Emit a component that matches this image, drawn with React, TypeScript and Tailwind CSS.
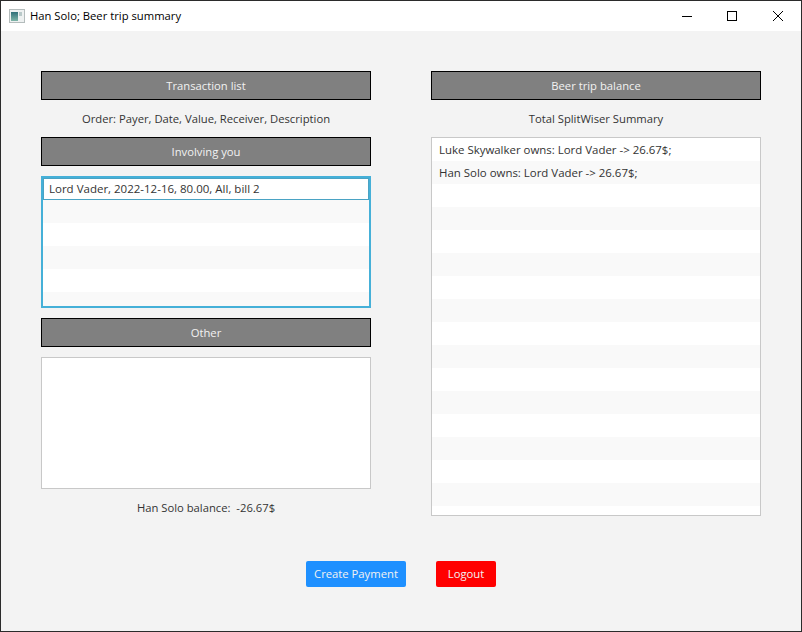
import React from 'react';

const font = "font-['Open_Sans','Noto_Sans',sans-serif]";

const SectionBar = ({ children }: { children: React.ReactNode }) => (
    <div className="h-[29px] shrink-0 flex items-center justify-center pt-px bg-[#808080] border border-black text-[11.25px] text-[#f2f2f2]">
        {children}
    </div>
);

const Caption = ({ children }: { children: React.ReactNode }) => (
    <div className="h-[37px] shrink-0 flex items-center justify-center pt-[2px] text-[11.25px] text-[#333333]">{children}</div>
);

const Row = ({ index, text }: { index: number; text?: string }) => (
    <div className={`h-[23px] shrink-0 flex items-center pl-[7px] text-[11.45px] text-[#333333] ${index % 2 === 1 ? 'bg-[#f9f9f9]' : 'bg-white'}`}>
        {text}
    </div>
);

const App: React.FC = () => {
    const summary = ['Luke Skywalker owns: Lord Vader -> 26.67$;', 'Han Solo owns: Lord Vader -> 26.67$;'];

    return (
        <div className={`${font} w-[802px] h-[632px] flex flex-col bg-[#f3f3f3] border border-[#2b2b2b] overflow-hidden`}>
            {/* Title bar */}
            <div className="h-[30px] shrink-0 bg-white flex items-center">
                <svg width="16" height="14" viewBox="0 0 16 14" className="ml-[8px] mr-[5px]">
                    <defs>
                        <linearGradient id="pane" x1="0" y1="0" x2="0" y2="1">
                            <stop offset="0" stopColor="#2f6f78" />
                            <stop offset="1" stopColor="#7fb5a8" />
                        </linearGradient>
                    </defs>
                    <rect x="0.5" y="0.5" width="15" height="13" fill="#eef1f1" stroke="#b4bcbc" />
                    <rect x="2" y="3" width="7" height="9" fill="url(#pane)" />
                    <rect x="10" y="3" width="3" height="4" fill="#b9c9c9" />
                </svg>
                <span className="text-[11.25px] text-black">Han Solo; Beer trip summary</span>
                <div className="ml-auto flex items-center">
                    <svg width="46" height="30" viewBox="0 0 46 30">
                        <path d="M19 15.5h10" stroke="#000" strokeWidth="1" />
                    </svg>
                    <svg width="46" height="30" viewBox="0 0 46 30">
                        <rect x="18.5" y="10.5" width="9" height="9" fill="none" stroke="#000" strokeWidth="1" />
                    </svg>
                    <svg width="46" height="30" viewBox="0 0 46 30">
                        <path d="M18 10l10 10M28 10l-10 10" stroke="#000" strokeWidth="1" fill="none" />
                    </svg>
                </div>
            </div>

            {/* Columns */}
            <div className="flex gap-[60px] pl-[40px] pt-[40px]">
                <div className="w-[330px] flex flex-col">
                    <SectionBar>Transaction list</SectionBar>
                    <Caption>Order: Payer, Date, Value, Receiver, Description</Caption>
                    <SectionBar>Involving you</SectionBar>
                    <div className="mt-[10px] h-[132px] border-2 border-[#45b0d8] bg-white overflow-hidden flex flex-col">
                        <div className="h-[22px] shrink-0 flex items-center pl-[5px] bg-white border border-[#4aa3c4] text-[11.5px] text-[#333333]">
                            Lord Vader, 2022-12-16, 80.00, All, bill 2
                        </div>
                        {[1, 2, 3, 4, 5].map(i => (
                            <Row key={i} index={i} />
                        ))}
                    </div>
                    <div className="mt-[10px]">
                        <SectionBar>Other</SectionBar>
                    </div>
                    <div className="mt-[10px] h-[132px] border border-[#c8c8c8] bg-white" />
                    <Caption>Han Solo balance:&nbsp; -26.67$</Caption>
                </div>

                <div className="w-[330px] flex flex-col">
                    <SectionBar>Beer trip balance</SectionBar>
                    <Caption>Total SplitWiser Summary</Caption>
                    <div className="h-[379px] border border-[#c8c8c8] bg-white overflow-hidden flex flex-col">
                        {Array.from({ length: 17 }).map((_, i) => (
                            <Row key={i} index={i} text={summary[i]} />
                        ))}
                    </div>
                </div>
            </div>

            {/* Actions */}
            <div className="flex justify-center gap-[30px] mt-[35px]">
                <button className="w-[100px] h-[26px] rounded-[2px] bg-[#1e90ff] text-[11.25px] text-[#f2f2f2]">Create Payment</button>
                <button className="w-[60px] h-[26px] rounded-[2px] bg-[#ff0000] text-[11.25px] text-[#f2f2f2]">Logout</button>
            </div>
        </div>
    );
};

export default App;
